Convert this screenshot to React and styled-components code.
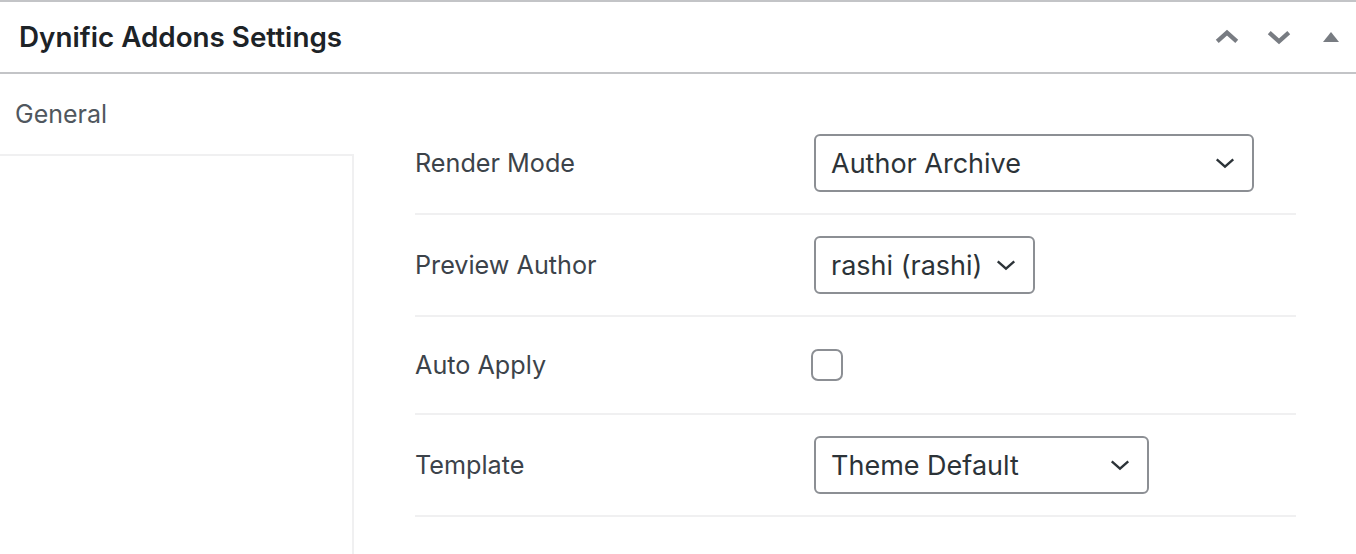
import React from "react";
import styled, { createGlobalStyle } from "styled-components";

const GlobalStyle = createGlobalStyle`
  html, body {
    margin: 0;
    padding: 0;
    background: #fff;
    font-family: Inter, "Noto Sans", "Liberation Sans", sans-serif;
  }
`;

const Postbox = styled.div`
    width: 1356px;
    height: 554px;
    background: #fff;
    border-top: 2px solid #c3c4c7;
    box-sizing: border-box;
    overflow: hidden;
    display: flex;
    flex-direction: column;
  `,
  Header = styled.div`
    display: flex;
    align-items: center;
    justify-content: space-between;
    height: 70px;
    border-bottom: 2px solid #c3c4c7;
    padding: 0 10px 0 19px;
  `,
  Title = styled.h2`
    margin: 0;
    font-size: 27.8px;
    font-weight: 600;
    color: #1d2327;
  `,
  HandleActions = styled.div`
    display: flex;
    align-items: center;
    gap: 22px;
  `,
  HandleButton = styled.span`
    display: flex;
    align-items: center;
    justify-content: center;
    width: 30px;
    height: 30px;
    color: #787c82;
  `,
  Body = styled.div`
    flex: 1;
    display: flex;
  `,
  TabNav = styled.div`
    width: 354px;
    display: flex;
    flex-direction: column;
  `,
  Tab = styled.div`
    height: 80px;
    display: flex;
    align-items: center;
    padding-left: 15px;
    font-size: 25px;
    color: #50575e;
  `,
  TabFill = styled.div`
    flex: 1;
    border-top: 2px solid #f0f0f1;
    border-right: 2px solid #f0f0f1;
  `,
  Panel = styled.div`
    flex: 1;
    padding: 39px 60px 0 61px;
  `,
  Row = styled.div`
    display: flex;
    align-items: center;
    height: ${p => (p.compact ? 96 : 100)}px;
    border-bottom: 2px solid #f0f0f1;
  `,
  Label = styled.div`
    width: 399px;
    font-size: 25.2px;
    color: #3c434a;
  `,
  Select = styled.div`
    box-sizing: border-box;
    width: ${p => p.width}px;
    height: 58px;
    border: 2px solid #8c8f94;
    border-radius: 6px;
    display: flex;
    align-items: center;
    justify-content: space-between;
    padding: 0 16px 0 15px;
    font-size: 27px;
    color: #2c3338;
  `,
  Checkbox = styled.div`
    box-sizing: border-box;
    width: 32px;
    height: 32px;
    margin-left: -3px;
    border: 2px solid #8c8f94;
    border-radius: 7px;
    background: #fff;
  `;

const Chevron = ({ dir = "down", size = 26, stroke = 4 }) => (
  <svg width={size} height={size} viewBox="0 0 24 24" fill="none">
    <path
      d={dir === "down" ? "M3 8l9 8 9-8" : "M3 16l9-8 9 8"}
      stroke="currentColor"
      strokeWidth={stroke}
      strokeLinecap="butt"
    />
  </svg>
);

const Caret = () => (
  <svg width="20" height="20" viewBox="0 0 20 20">
    <path d="M2 15l8-10 8 10z" fill="currentColor" />
  </svg>
);

const SelectArrow = () => (
  <svg width="22" height="22" viewBox="0 0 24 24" fill="none">
    <path d="M3 8l9 8 9-8" stroke="#2c3338" strokeWidth="2.6" />
  </svg>
);

const rows = [
  { label: "Render Mode", type: "select", value: "Author Archive", width: 440 },
  { label: "Preview Author", type: "select", value: "rashi (rashi)", width: 221 },
  { label: "Auto Apply", type: "checkbox" },
  { label: "Template", type: "select", value: "Theme Default", width: 335 }
];

const App = () => {
  return (
    <>
      <GlobalStyle />
      <Postbox>
        <Header>
          <Title>Dynific Addons Settings</Title>
          <HandleActions>
            <HandleButton>
              <Chevron dir="up" />
            </HandleButton>
            <HandleButton>
              <Chevron dir="down" />
            </HandleButton>
            <HandleButton>
              <Caret />
            </HandleButton>
          </HandleActions>
        </Header>
        <Body>
          <TabNav>
            <Tab>General</Tab>
            <TabFill />
          </TabNav>
          <Panel>
            {rows.map((row, i) => (
              <Row key={`row${i}`} compact={row.type === "checkbox"}>
                <Label>{row.label}</Label>
                {row.type === "select" ? (
                  <Select width={row.width}>
                    <span>{row.value}</span>
                    <SelectArrow />
                  </Select>
                ) : (
                  <Checkbox />
                )}
              </Row>
            ))}
          </Panel>
        </Body>
      </Postbox>
    </>
  );
};

export default App;
